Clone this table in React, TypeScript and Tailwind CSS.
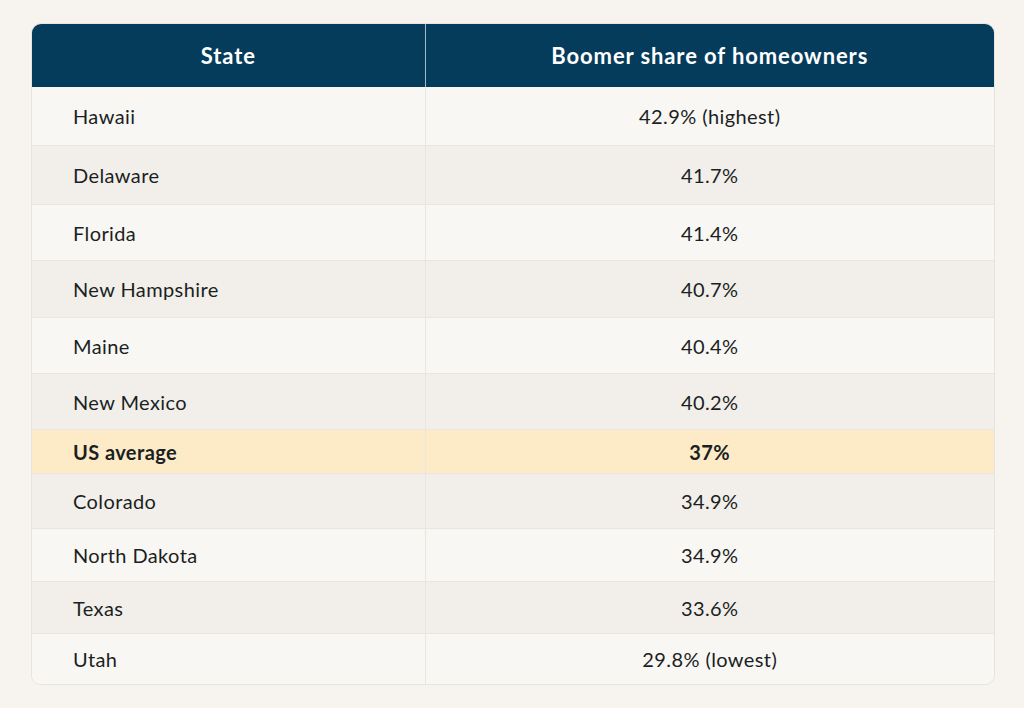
import React from 'react';

interface Row {
  state: string;
  share: string;
  h: string;
  bg: string;
  bold?: boolean;
}

const rows: Row[] = [
  { state: 'Hawaii', share: '42.9% (highest)', h: 'h-[58px]', bg: 'bg-[#f9f7f4]' },
  { state: 'Delaware', share: '41.7%', h: 'h-[59px]', bg: 'bg-[#f2efeb]' },
  { state: 'Florida', share: '41.4%', h: 'h-[56px]', bg: 'bg-[#f9f7f4]' },
  { state: 'New Hampshire', share: '40.7%', h: 'h-[57px]', bg: 'bg-[#f2efeb]' },
  { state: 'Maine', share: '40.4%', h: 'h-[56px]', bg: 'bg-[#f9f7f4]' },
  { state: 'New Mexico', share: '40.2%', h: 'h-[56px]', bg: 'bg-[#f2efeb]' },
  { state: 'US average', share: '37%', h: 'h-[44px]', bg: 'bg-[#fdebc7]', bold: true },
  { state: 'Colorado', share: '34.9%', h: 'h-[55px]', bg: 'bg-[#f2efeb]' },
  { state: 'North Dakota', share: '34.9%', h: 'h-[53px]', bg: 'bg-[#f9f7f4]' },
  { state: 'Texas', share: '33.6%', h: 'h-[52px]', bg: 'bg-[#f2efeb]' },
  { state: 'Utah', share: '29.8% (lowest)', h: 'h-[51px]', bg: 'bg-[#f9f7f4]' },
];

export default function App() {
  return (
    <div
      className="w-[1024px] h-[708px] bg-[#f7f4f0] pt-[23px] pl-[31px]"
      style={{ fontFamily: 'Lato, "Open Sans", sans-serif' }}
    >
      <div className="w-[964px] rounded-[10px] overflow-hidden border border-[#e7e3dd]">
        <table className="w-full border-collapse">
          <thead>
            <tr className="h-[63px] bg-[#053c5b] text-white text-[22px] tracking-[0.9px] font-bold">
              <th className="w-[393px] border-r border-[#a9b9c4] font-bold">State</th>
              <th className="font-bold">Boomer share of homeowners</th>
            </tr>
          </thead>
          <tbody className="text-[20px] tracking-[0.4px] text-[#1b1f23]">
            {rows.map((r, i) => (
              <tr
                key={r.state}
                className={`${r.h} ${r.bg} ${i > 0 ? 'border-t border-[#e9e5df]' : ''} ${r.bold ? 'font-bold' : ''}`}
              >
                <td className="pl-[41px] pt-[1px] border-r border-[#e9e5df]">{r.state}</td>
                <td className="text-center pt-[1px]">{r.share}</td>
              </tr>
            ))}
          </tbody>
        </table>
      </div>
    </div>
  );
}
